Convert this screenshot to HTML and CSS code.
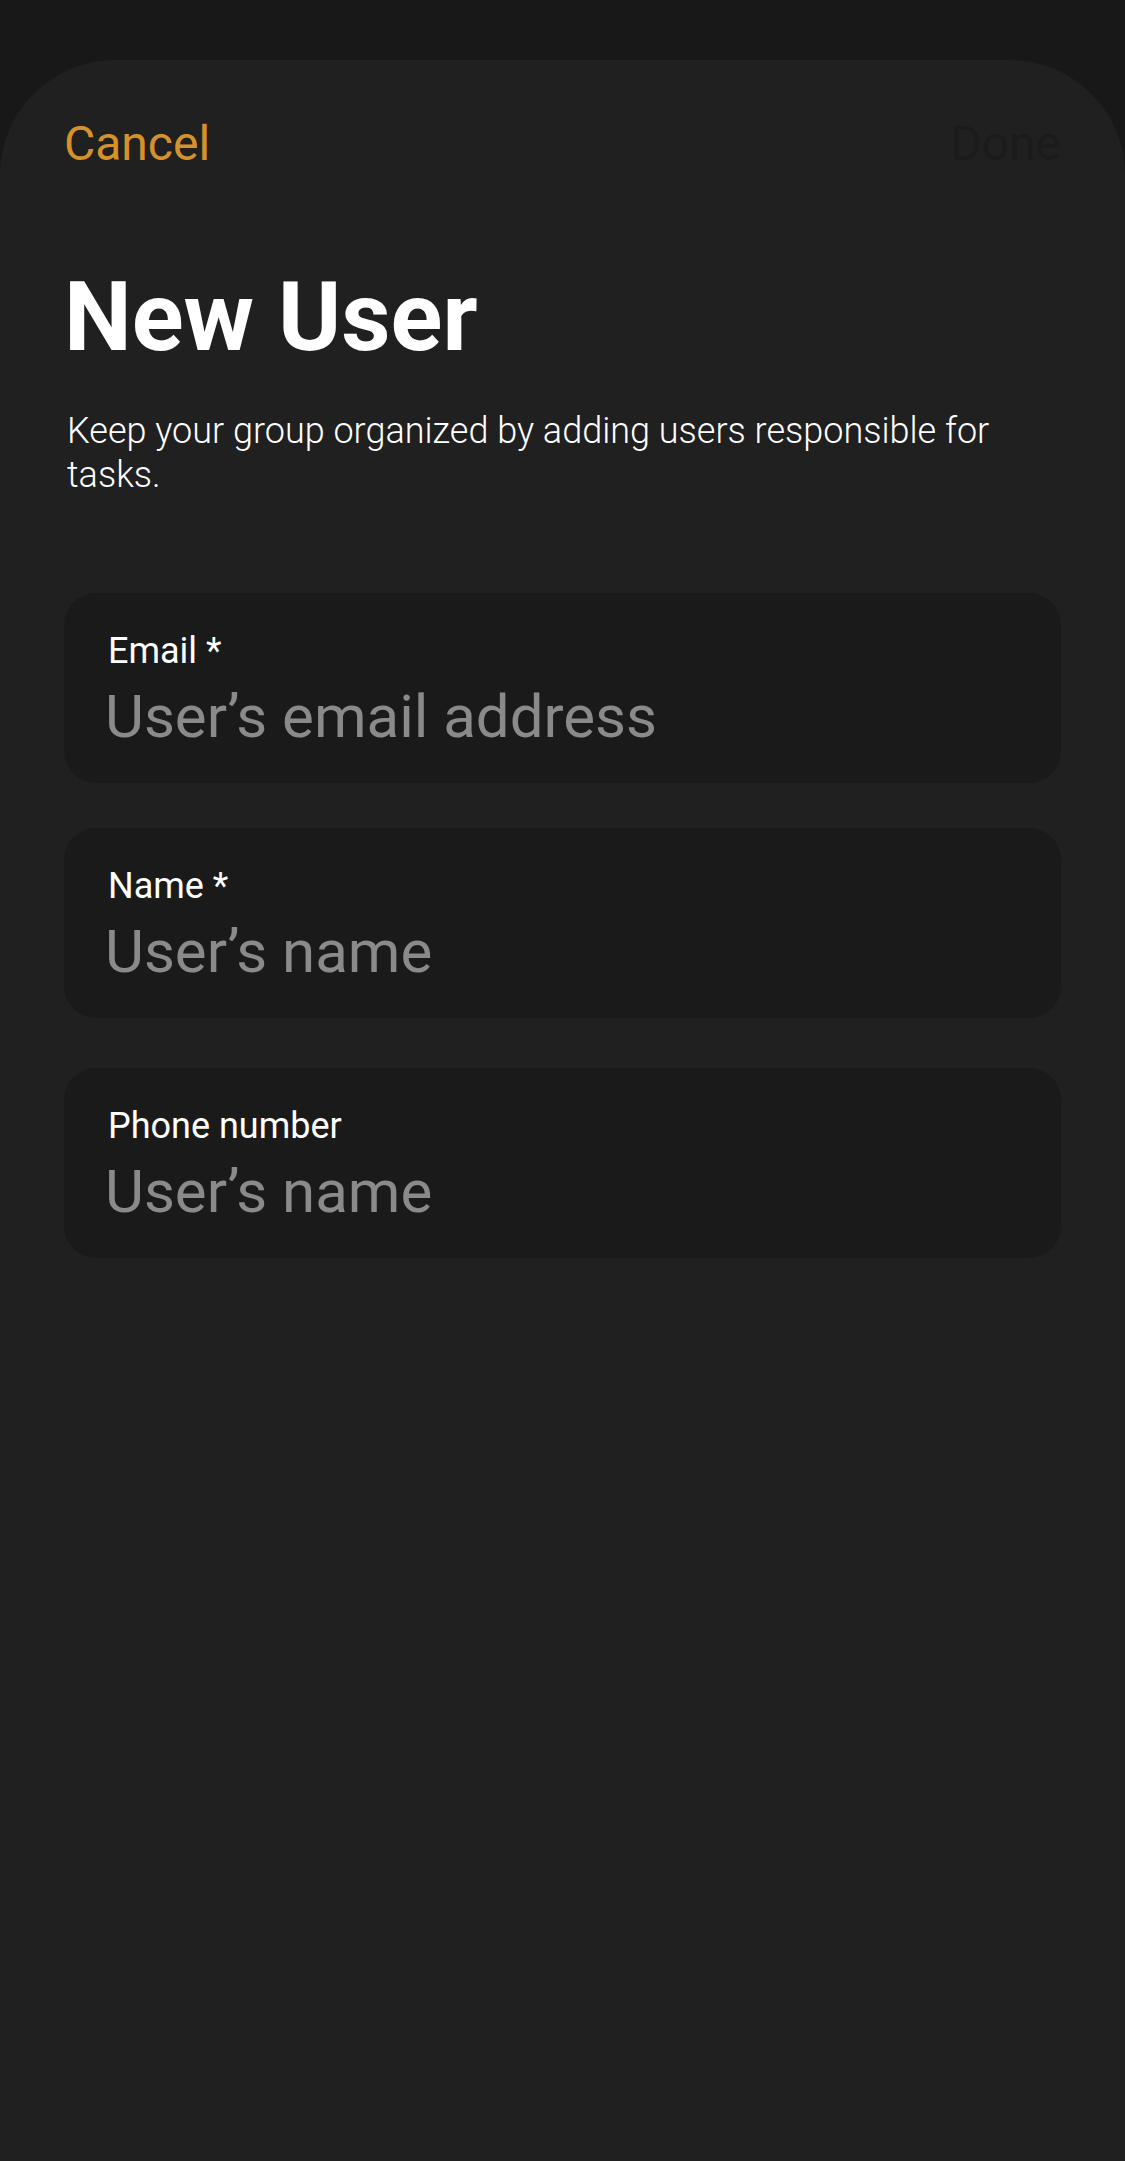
FILE: index.html
```html
<!DOCTYPE html>
<html lang="en">
<head>
<meta charset="utf-8">
<title>New User</title>
<link rel="stylesheet" href="styles.css">
</head>
<body>
<main class="sheet">
  <header class="nav">
    <button class="nav-btn nav-cancel" type="button">Cancel</button>
    <button class="nav-btn nav-done" type="button">Done</button>
  </header>
  <h1 class="title">New User</h1>
  <p class="subtitle">Keep your group organized by adding users responsible for tasks.</p>
  <form class="fields">
    <label class="field">
      <span class="field-label">Email *</span>
      <input class="field-input" type="email" placeholder="User’s email address">
    </label>
    <label class="field">
      <span class="field-label">Name *</span>
      <input class="field-input" type="text" placeholder="User’s name">
    </label>
    <label class="field field-sep">
      <span class="field-label">Phone number</span>
      <input class="field-input" type="tel" placeholder="User’s name">
    </label>
  </form>
</main>
</body>
</html>
```
FILE: styles.css
```css
html, body {
  margin: 0;
  padding: 0;
}
body {
  background: #181818;
  font-family: Roboto, "Liberation Sans", sans-serif;
  color: #ffffff;
}
.sheet {
  margin-top: 60px;
  min-height: calc(100vh - 60px);
  background: #202020;
  border-radius: 115px 115px 0 0;
  padding: 0 64px;
  box-sizing: border-box;
}
.nav {
  display: flex;
  justify-content: space-between;
  align-items: center;
  padding-top: 60px;
}
.nav-btn {
  background: none;
  border: 0;
  padding: 0;
  margin: 0;
  font-family: inherit;
  font-size: 48px;
  line-height: 48px;
  font-weight: 400;
}
.nav-cancel {
  color: #d6922a;
}
.nav-done {
  color: #1b1b1b;
}
.title {
  margin: 101px 0 0 0;
  font-size: 96px;
  line-height: 96px;
  font-weight: 700;
  color: #ffffff;
}
.subtitle {
  margin: 44px 0 0 3px;
  font-size: 36px;
  line-height: 44px;
  font-weight: 300;
  color: #ffffff;
}
.fields {
  display: flex;
  flex-direction: column;
  gap: 45px;
  margin-top: 96px;
}
.field {
  display: flex;
  flex-direction: column;
  gap: 17px;
  background: #1a1a1a;
  border-radius: 32px;
  padding: 40px 44px 37px 44px;
}
.field-sep {
  margin-top: 5px;
}
.field-label {
  font-size: 36px;
  line-height: 36px;
  font-weight: 400;
  color: #ffffff;
}
.field-input {
  display: block;
  width: 100%;
  box-sizing: border-box;
  border: 0;
  outline: none;
  background: transparent;
  padding: 0;
  margin: 0 0 0 -3px;
  font-family: inherit;
  font-size: 60px;
  line-height: 60px;
  height: 60px;
  font-weight: 400;
  color: #ffffff;
}
.field-input::placeholder {
  color: #8a8a8a;
  opacity: 1;
}
```
